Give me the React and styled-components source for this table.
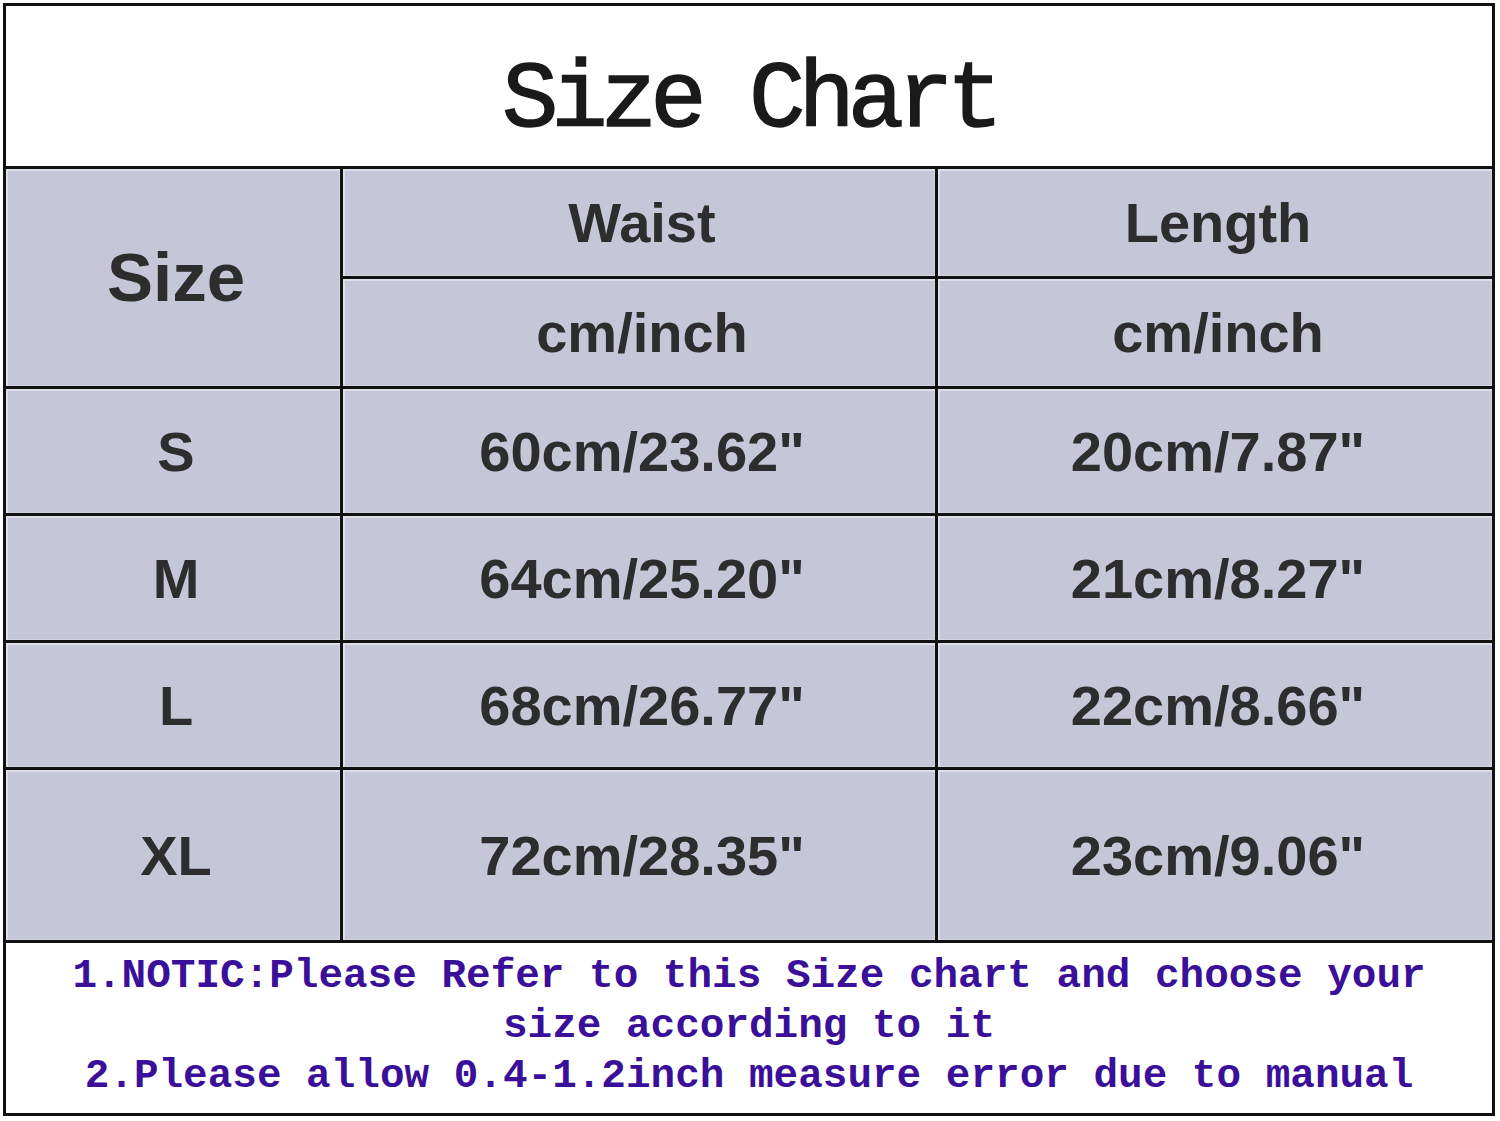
import React from 'react'
import styled, { createGlobalStyle } from 'styled-components'

const GlobalStyle = createGlobalStyle`
  html, body {
    margin: 0;
    padding: 0;
    background: #fff;
  }
`

const rows = [
    { size: 'S', waist: '60cm/23.62"', length: '20cm/7.87"' },
    { size: 'M', waist: '64cm/25.20"', length: '21cm/8.27"' },
    { size: 'L', waist: '68cm/26.77"', length: '22cm/8.66"' },
    { size: 'XL', waist: '72cm/28.35"', length: '23cm/9.06"' },
]

const notes = [
    '1.NOTIC:Please Refer to this Size chart and choose your',
    'size according to it',
    '2.Please allow 0.4-1.2inch measure error due to manual',
]

const App = () => {
    return (
        <Page>
            <GlobalStyle />
            <Chart>
                <Title>Size Chart</Title>
                <Cell $rowSpan={2} $big>Size</Cell>
                <Cell>Waist</Cell>
                <Cell>Length</Cell>
                <Cell>cm/inch</Cell>
                <Cell>cm/inch</Cell>
                {rows.map(r => (
                    <React.Fragment key={r.size}>
                        <Cell>{r.size}</Cell>
                        <Cell>{r.waist}</Cell>
                        <Cell>{r.length}</Cell>
                    </React.Fragment>
                ))}
                <Notes>
                    {notes.map(n => (
                        <NoteLine key={n}>{n}</NoteLine>
                    ))}
                </Notes>
            </Chart>
        </Page>
    )
}

const Page = styled.div`
    padding: 3px;
    width: 1500px;
    height: 1121px;
    box-sizing: border-box;
    overflow: hidden;
`
const Chart = styled.div`
    display: grid;
    grid-template-columns: 334px 592px 554px;
    grid-template-rows: 160px 107px 107px 124px 124px 124px 170px 170px;
    gap: 3px;
    padding: 3px;
    width: 1492px;
    box-sizing: border-box;
    background: #111;
`
const Title = styled.div`
    grid-column: 1 / -1;
    background: #fff;
    display: flex;
    align-items: center;
    justify-content: center;
    padding-top: 30px;
    box-sizing: border-box;
    font-family: "Liberation Mono", "Courier New", monospace;
    font-weight: normal;
    -webkit-text-stroke: 1.5px #1a1a1a;
    font-size: 94px;
    letter-spacing: -7px;
    color: #1a1a1a;
    white-space: pre;
`
const Cell = styled.div`
    grid-row: ${p => (p.$rowSpan ? `span ${p.$rowSpan}` : 'auto')};
    background: #c6c6d9;
    box-shadow: inset 2px 2px 0 #dedee9, inset -1px -1px 0 #d2d2e0;
    display: flex;
    align-items: center;
    justify-content: center;
    padding-left: 6px;
    font-family: "Liberation Sans", Arial, sans-serif;
    font-weight: bold;
    font-size: ${p => (p.$big ? '69px' : '56px')};
    color: #2d2d2d;
`
const Notes = styled.div`
    grid-column: 1 / -1;
    background: #fff;
    overflow: hidden;
    padding-top: 8px;
    font-family: "Liberation Mono", "Courier New", monospace;
    font-weight: bold;
    font-size: 41px;
    line-height: 50px;
    color: #3a0f99;
    text-align: center;
`
const NoteLine = styled.div`
    white-space: nowrap;
`

export default App
